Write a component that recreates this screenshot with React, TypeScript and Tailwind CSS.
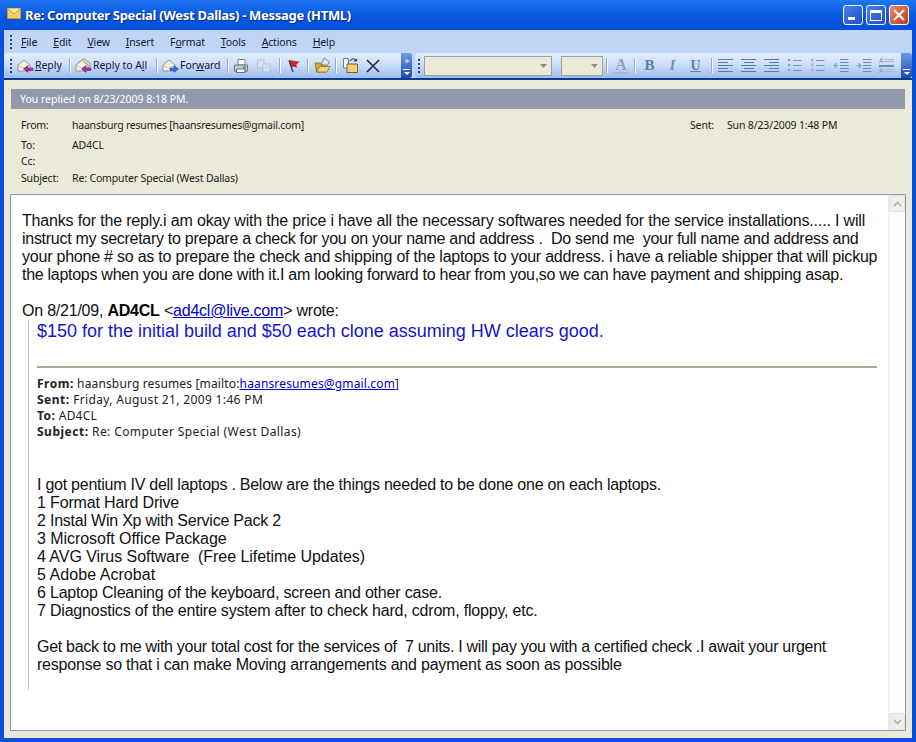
import React from "react";

const tahoma = "font-['Noto_Sans','Liberation_Sans',sans-serif]";

function Grip() {
  return (
    <div className="flex flex-col gap-[2px] w-[3px] shrink-0">
      <div className="w-[2px] h-[2px] bg-[#27418f]" />
      <div className="w-[2px] h-[2px] bg-[#27418f]" />
      <div className="w-[2px] h-[2px] bg-[#27418f]" />
      <div className="w-[2px] h-[2px] bg-[#27418f]" />
    </div>
  );
}

function Sep({ ml }: { ml: string }) {
  return <div className={`w-[2px] h-[15px] shrink-0 bg-[#8fa8d6] border-r border-white ${ml}`} />;
}

function Mail({ kind }: { kind: "reply" | "all" | "forward" }) {
  const arrow = kind === "forward" ? "#2f6fd8" : "#a0309c";
  return (
    <svg width="17" height="17" viewBox="0 0 17 17" className="shrink-0">
      {kind === "all" && <path d="M3 6 L9 1.5 L15 6 V10 H3 Z" fill="#e8dcb0" stroke="#8a8a98" strokeWidth="0.8" />}
      <path d="M1 8 L7 3 L13 8 V14 H1 Z" fill="#f7efc8" stroke="#8b8fa3" strokeWidth="0.9" />
      <path d="M1 8 L7 11 L13 8" fill="#fff" stroke="#a8a8b0" strokeWidth="0.7" />
      {kind === "forward" ? (
        <path d="M8 11 H12 V8.5 L16.5 12 L12 15.5 V13.5 H8 Z" fill={arrow} stroke="#1b3f90" strokeWidth="0.5" />
      ) : (
        <path d="M16 11 H11 V8.5 L6.5 12 L11 15.5 V13.5 H16 Z" fill={arrow} stroke="#6b1a70" strokeWidth="0.5" />
      )}
    </svg>
  );
}

function Printer() {
  return (
    <svg width="16" height="16" viewBox="0 0 16 16" className="shrink-0">
      <path d="M5 1.5 H12 V7 H5 Z" fill="#fff" stroke="#7d8794" />
      <path d="M1.5 7 H14.5 V13 H1.5 Z" fill="#c3cbd3" stroke="#68737f" />
      <rect x="10" y="8.5" width="3" height="2" fill="#3f9c45" />
      <path d="M3.5 11 H12 V14.5 H3.5 Z" fill="#f4f6f8" stroke="#68737f" />
    </svg>
  );
}

function CopyIcon() {
  return (
    <svg width="16" height="16" viewBox="0 0 16 16" className="shrink-0 opacity-70">
      <path d="M1.5 2 H8 V10 H1.5 Z" fill="#dde4ef" stroke="#aab6c8" />
      <path d="M7 6 H14 V14 H7 Z" fill="#e9eef6" stroke="#aab6c8" />
      <path d="M8.5 8.5 H12.5 M8.5 10.5 H12.5" stroke="#bcc6d6" />
    </svg>
  );
}

function Flag() {
  return (
    <svg width="12" height="14" viewBox="0 0 12 14" className="shrink-0">
      <path d="M1 1.5 C4 0.5 7 3 11.5 2.5 L8 6 L9.5 8.5 C6 8 4 7.5 3 8 Z" fill="#c5262a" />
      <path d="M1 1.5 L5 13" stroke="#3c3c48" strokeWidth="1.4" />
    </svg>
  );
}

function OpenFolder() {
  return (
    <svg width="17" height="17" viewBox="0 0 17 17" className="shrink-0">
      <path d="M7 7 L10.5 1 L15.5 5 L12 10 Z" fill="#dfe6f2" stroke="#5a6a88" strokeWidth="0.8" />
      <path d="M1 6 H6 L7 8 H12 V15 H2.5 Z" fill="#d6a93a" stroke="#8c6a1d" strokeWidth="0.8" />
      <path d="M3 15 L5.5 9.5 H16 L13 15 Z" fill="#f4d477" stroke="#8c6a1d" strokeWidth="0.8" />
    </svg>
  );
}

function MoveIcon() {
  return (
    <svg width="17" height="17" viewBox="0 0 17 17" className="shrink-0">
      <path d="M1.5 1.5 H6.5 V11 H1.5 Z" fill="#fff" stroke="#77787c" />
      <path d="M5 7 H15.5 V15.5 H5 Z" fill="#f2d27a" stroke="#7a6320" />
      <path d="M8 4 C10 1 13 1 14 4 M14 4 L12 4 M14 4 L15 2" fill="none" stroke="#26304f" strokeWidth="1.2" />
    </svg>
  );
}

function CloseX() {
  return (
    <svg width="14" height="14" viewBox="0 0 14 14" className="shrink-0">
      <path d="M1 1 L13 13 M13 1 L1 13" stroke="#2d2d38" strokeWidth="1.7" />
    </svg>
  );
}

function Lines({ widths, align }: { widths: number[]; align: "l" | "c" | "r" }) {
  const cls = align === "l" ? "items-start" : align === "c" ? "items-center" : "items-end";
  return (
    <div className={`flex flex-col gap-[2px] w-[15px] shrink-0 ${cls}`}>
      {widths.map((w, i) => (
        <div key={i} className="h-[1px] bg-[#5d77a8]" style={{ width: w }} />
      ))}
    </div>
  );
}

function ListIcon({ numbered }: { numbered?: boolean }) {
  return (
    <svg width="15" height="15" viewBox="0 0 15 15" className="shrink-0">
      {[2, 7, 12].map((y) => (
        <g key={y}>
          {numbered ? (
            <rect x="1" y={y - 1.5} width="2.5" height="3" fill="#a4b6d6" />
          ) : (
            <circle cx="2" cy={y} r="1.3" fill="#8ba0c8" />
          )}
          <path d={`M6 ${y + 0.5} H14.5`} stroke="#7d93bc" />
        </g>
      ))}
    </svg>
  );
}

function IndentIcon({ right }: { right?: boolean }) {
  return (
    <svg width="16" height="15" viewBox="0 0 16 15" className="shrink-0">
      {[1.5, 4.5, 7.5, 10.5, 13.5].map((y) => (
        <path key={y} d={`M7 ${y} H15.5`} stroke="#6f87b4" />
      ))}
      {right ? (
        <path d="M0.5 7.5 H4 M2.5 5 L5 7.5 L2.5 10" fill="none" stroke="#8aa0c6" strokeWidth="1.1" />
      ) : (
        <path d="M5.5 7.5 H1.5 M3.5 5 L1 7.5 L3.5 10" fill="none" stroke="#8aa0c6" strokeWidth="1.1" />
      )}
    </svg>
  );
}

function Combo({ w, ml }: { w: string; ml?: string }) {
  return (
    <div className={`h-[20px] ${w} ${ml ?? ""} shrink-0 bg-[#ece9d8] border border-[#9aa0a6] flex items-center justify-end pr-[4px]`}>
      <svg width="7" height="4" viewBox="0 0 7 4">
        <path d="M0 0 H7 L3.5 4 Z" fill="#8c8c88" />
      </svg>
    </div>
  );
}

function Chevron({ both }: { both?: boolean }) {
  return (
    <div className="w-[11px] h-[25px] shrink-0 self-start rounded-r-[3px] bg-gradient-to-b from-[#6f9be4] to-[#1c4aa8] flex flex-col items-center justify-end pb-[3px] gap-[2px]">
      {both && <div className="text-[7px] leading-[7px] text-white font-bold mb-[3px] tracking-[-1px]">»</div>}
      <div className="w-[7px] h-[1px] bg-white" />
      <div className="w-0 h-0 border-l-[3px] border-r-[3px] border-t-[3px] border-l-transparent border-r-transparent border-t-white" />
    </div>
  );
}

function MenuItem({ pre, u, post }: { pre?: string; u: string; post: string }) {
  return (
    <span className="text-[#10172a]">
      {pre}
      <span className="underline">{u}</span>
      {post}
    </span>
  );
}

function HeaderRow({ label, value, className }: { label: string; value: string; className?: string }) {
  return (
    <div className={`flex h-[16px] items-center whitespace-nowrap ${className ?? ""}`}>
      <div className="w-[51px] shrink-0">{label}</div>
      <div>{value}</div>
    </div>
  );
}

export default function App() {
  return (
    <div className="w-[916px] h-[742px] flex flex-col bg-[#0a4fdc] overflow-hidden">
      {/* Title bar */}
      <div className="h-[30px] shrink-0 flex items-center pl-[7px] pr-[7px] bg-gradient-to-b from-[#1f77f0] via-[#0a58e2] to-[#0450dc]">
        <svg width="14" height="11" viewBox="0 0 14 11" className="shrink-0 -mt-[3px]">
          <rect x="0.5" y="0.5" width="13" height="10" fill="#f4cf6a" stroke="#c69a30" />
          <path d="M0.5 0.5 L7 6 L13.5 0.5" fill="#fbe9a6" stroke="#c69a30" />
        </svg>
        <div className={`ml-[4px] text-white text-[13px] font-bold leading-[16px] tracking-[-0.3px] [text-shadow:1px_1px_1px_#0a2a80] ${tahoma}`}>
          Re: Computer Special (West Dallas) - Message (HTML)
        </div>
        <div className="ml-auto flex gap-[3px]">
          <div className="w-[20px] h-[20px] rounded-[3px] border border-white bg-gradient-to-br from-[#4a80ec] to-[#1c4ec8] flex items-end pl-[4px] pb-[4px]">
            <div className="w-[7px] h-[3px] bg-white" />
          </div>
          <div className="w-[20px] h-[20px] rounded-[3px] border border-white bg-gradient-to-br from-[#4a80ec] to-[#1c4ec8] flex items-center justify-center">
            <div className="w-[12px] h-[11px] border border-white border-t-[3px]" />
          </div>
          <div className="w-[20px] h-[20px] rounded-[3px] border border-white bg-gradient-to-br from-[#e8856a] to-[#c43a18] flex items-center justify-center">
            <svg width="12" height="12" viewBox="0 0 12 12">
              <path d="M1 1 L11 11 M11 1 L1 11" stroke="#fff" strokeWidth="2" />
            </svg>
          </div>
        </div>
      </div>

      {/* Client area */}
      <div className="flex-1 min-h-0 mx-[4px] mb-[4px] flex flex-col bg-[#ece9d8]">
        {/* Menu bar */}
        <div className={`h-[23px] shrink-0 bg-[#c0d5f5] flex items-center pl-[6px] text-[10.5px] leading-[14px] ${tahoma}`}>
          <Grip />
          <div className="ml-[8px] flex gap-[16px] tracking-[-0.15px]">
            <MenuItem u="F" post="ile" />
            <MenuItem u="E" post="dit" />
            <MenuItem u="V" post="iew" />
            <MenuItem u="I" post="nsert" />
            <MenuItem pre="F" u="o" post="rmat" />
            <MenuItem u="T" post="ools" />
            <MenuItem u="A" post="ctions" />
            <MenuItem u="H" post="elp" />
          </div>
        </div>

        {/* Toolbars */}
        <div className="h-[27px] shrink-0 bg-[#c0d5f5] border-b-[2px] border-[#0b3a94] flex">
          <div className={`w-[397px] h-[25px] shrink-0 rounded-l-[3px] bg-gradient-to-b from-[#e3eefd] via-[#c9dcf8] to-[#9dbbea] flex items-center pl-[6px] text-[10.5px] text-[#111a30] tracking-[-0.05px] ${tahoma}`}>
            <Grip />
            <div className="ml-[4px]"><Mail kind="reply" /></div>
            <span className="ml-[1px] w-[27px]"><span className="underline">R</span>eply</span>
            <Sep ml="ml-[7px]" />
            <div className="ml-[4px]"><Mail kind="all" /></div>
            <span className="ml-[1px] w-[55px] whitespace-nowrap">Reply to A<span className="underline">l</span>l</span>
            <Sep ml="ml-[8px]" />
            <div className="ml-[4px]"><Mail kind="forward" /></div>
            <span className="ml-[1px] w-[41px]">For<span className="underline">w</span>ard</span>
            <Sep ml="ml-[6px]" />
            <div className="ml-[4px]"><Printer /></div>
            <div className="ml-[7px]"><CopyIcon /></div>
            <Sep ml="ml-[7px]" />
            <div className="ml-[7px]"><Flag /></div>
            <Sep ml="ml-[7px]" />
            <div className="ml-[5px]"><OpenFolder /></div>
            <Sep ml="ml-[4px]" />
            <div className="ml-[5px]"><MoveIcon /></div>
            <div className="ml-[7px]"><CloseX /></div>
          </div>
          <Chevron both />
          <div className="w-[3px] shrink-0" />
          <div className="w-[486px] h-[25px] shrink-0 rounded-l-[3px] bg-gradient-to-b from-[#e3eefd] via-[#c9dcf8] to-[#9dbbea] flex items-center pl-[3px]">
            <Grip />
            <Combo w="w-[128px]" ml="ml-[3px]" />
            <Combo w="w-[42px]" ml="ml-[9px]" />
            <Sep ml="ml-[3px]" />
            <div className="ml-[5px] w-[16px] text-center text-[16px] leading-[15px] font-bold text-[#8ea2c4] border-b-[2px] border-[#a9b8d2] font-['Liberation_Serif',serif]">A</div>
            <Sep ml="ml-[5px]" />
            <div className="ml-[8px] w-[11px] text-center text-[15px] font-bold text-[#5f7cad] font-['Liberation_Serif',serif]">B</div>
            <div className="ml-[12px] w-[11px] text-center text-[15px] font-bold italic text-[#7d8fb0] font-['Liberation_Serif',serif]">I</div>
            <div className="ml-[12px] w-[11px] text-center text-[14px] leading-[15px] font-bold underline text-[#5f7cad] font-['Liberation_Serif',serif]">U</div>
            <Sep ml="ml-[10px]" />
            <div className="ml-[5px]"><Lines widths={[15, 10, 15, 10, 15]} align="l" /></div>
            <div className="ml-[8px]"><Lines widths={[15, 10, 15, 10, 15]} align="c" /></div>
            <div className="ml-[8px]"><Lines widths={[15, 10, 15, 10, 15]} align="r" /></div>
            <div className="ml-[8px]"><ListIcon /></div>
            <div className="ml-[8px]"><ListIcon numbered /></div>
            <div className="ml-[8px]"><IndentIcon /></div>
            <div className="ml-[7px]"><IndentIcon right /></div>
            <div className="ml-[7px] flex flex-col gap-[1px] w-[15px] text-[7px] leading-[6px] text-[#7d93bc]">
              <div className="flex items-center gap-[1px]"><span>A</span><div className="flex-1 h-[3px] border-y border-[#a5b6d4]" /></div>
              <div className="h-[2px] bg-[#6f87b4]" />
              <div className="flex items-center gap-[1px]"><span>A</span><div className="flex-1 h-[3px] border-y border-[#a5b6d4]" /></div>
            </div>
          </div>
          <Chevron />
        </div>

        {/* Content area */}
        <div className="flex-1 min-h-0 pl-[6px] pr-[6px] pb-[7px] flex flex-col">
          <div className={`mt-[9px] mx-[1px] h-[20px] shrink-0 bg-[#9299ad] text-white text-[10.5px] leading-[20px] pl-[9px] ${tahoma}`}>
            You replied on 8/23/2009 8:18 PM.
          </div>
          <div className={`h-[85px] shrink-0 pl-[11px] pt-[8px] text-[10.5px] tracking-[-0.15px] leading-[16px] text-[#1a1a1a] ${tahoma}`}>
            <div className="flex">
              <div className="w-[669px] shrink-0 tracking-[-0.22px]">
                <HeaderRow label="From:" value="haansburg resumes [haansresumes@gmail.com]" />
              </div>
              <div className="flex h-[16px] items-center whitespace-nowrap">
                <div className="w-[37px]">Sent:</div>
                <div>Sun 8/23/2009 1:48 PM</div>
              </div>
            </div>
            <HeaderRow label="To:" value="AD4CL" className="mt-[4px]" />
            <HeaderRow label="Cc:" value="" />
            <HeaderRow label="Subject:" value="Re: Computer Special (West Dallas)" className="mt-[1px]" />
          </div>

          {/* Message */}
          <div className="flex-1 min-h-0 border border-[#7f9db9] bg-white flex font-['Liberation_Sans',sans-serif] text-[16px] leading-[18px] tracking-[-0.22px] text-[#111]">
            <div className="flex-1 min-w-0 pl-[11px] pt-[17px] pr-[8px]">
              <div className="whitespace-pre tracking-[-0.17px]">Thanks for the reply.i am okay with the price i have all the necessary softwares needed for the service installations..... I will</div>
              <div className="whitespace-pre tracking-[-0.28px]">instruct my secretary to prepare a check for you on your name and address .  Do send me  your full name and address and</div>
              <div className="whitespace-pre">your phone # so as to prepare the check and shipping of the laptops to your address. i have a reliable shipper that will pickup</div>
              <div className="whitespace-pre tracking-[-0.28px]">the laptops when you are done with it.I am looking forward to hear from you,so we can have payment and shipping asap.</div>
              <div className="mt-[18px]">
                On 8/21/09, <b className="text-black">AD4CL</b> &lt;<span className="underline text-[#0000cc]">ad4cl@live.com</span>&gt; wrote:
              </div>
              <div className="ml-[6px] h-[370px] border-l border-[#c4c4c4] pl-[8px] pt-[2px]">
                <div className="text-[#1414cc] text-[18px] tracking-[-0.01px]">$150 for the initial build and $50 each clone assuming HW clears good.</div>
                <div className="mt-[26px] h-[2px] bg-[#aca899] w-[840px]" />
                <div className={`mt-[8px] text-[12px] leading-[16px] text-[#222] ${tahoma}`}>
                  <div className="tracking-[0.15px]"><b className="tracking-[0.5px]">From:</b> haansburg resumes [mailto:<span className="underline text-[#0000cc]">haansresumes@gmail.com</span>]</div>
                  <div className="tracking-[0.35px]"><b className="tracking-[0.5px]">Sent:</b> Friday, August 21, 2009 1:46 PM</div>
                  <div className="tracking-[0.2px]"><b className="tracking-[0.5px]">To:</b> AD4CL</div>
                  <div className="tracking-[0.4px]"><b className="tracking-[0.5px]">Subject:</b> Re: Computer Special (West Dallas)</div>
                </div>
                <div className="mt-[36px] tracking-[-0.25px]">I got pentium IV dell laptops . Below are the things needed to be done one on each laptops.</div>
                <div className="tracking-[-0.15px]">1 Format Hard Drive</div>
                <div className="tracking-[-0.22px]">2 Instal Win Xp with Service Pack 2</div>
                <div className="tracking-[-0.05px]">3 Microsoft Office Package</div>
                <div className="whitespace-pre tracking-[-0.05px]">4 AVG Virus Software  (Free Lifetime Updates)</div>
                <div className="tracking-[0.05px]">5 Adobe Acrobat</div>
                <div className="tracking-[-0.2px]">6 Laptop Cleaning of the keyboard, screen and other case.</div>
                <div className="tracking-[-0.2px]">7 Diagnostics of the entire system after to check hard, cdrom, floppy, etc.</div>
                <div className="mt-[18px] whitespace-pre tracking-[-0.3px]">Get back to me with your total cost for the services of  7 units. I will pay you with a certified check .I await your urgent</div>
                <div className="tracking-[-0.21px]">response so that i can make Moving arrangements and payment as soon as possible</div>
              </div>
            </div>
            {/* Scrollbar */}
            <div className="w-[17px] shrink-0 bg-[#fbfbf8] border-l border-[#eeeeea] flex flex-col justify-between">
              <div className="h-[17px] bg-[#eeeeea] border border-[#e2e2dc] rounded-[2px] flex items-center justify-center">
                <svg width="9" height="6" viewBox="0 0 9 6"><path d="M1 5 L4.5 1.5 L8 5" fill="none" stroke="#b0b0a8" strokeWidth="1.6" /></svg>
              </div>
              <div className="h-[17px] bg-[#eeeeea] border border-[#e2e2dc] rounded-[2px] flex items-center justify-center">
                <svg width="9" height="6" viewBox="0 0 9 6"><path d="M1 1 L4.5 4.5 L8 1" fill="none" stroke="#b0b0a8" strokeWidth="1.6" /></svg>
              </div>
            </div>
          </div>
        </div>
      </div>
    </div>
  );
}
